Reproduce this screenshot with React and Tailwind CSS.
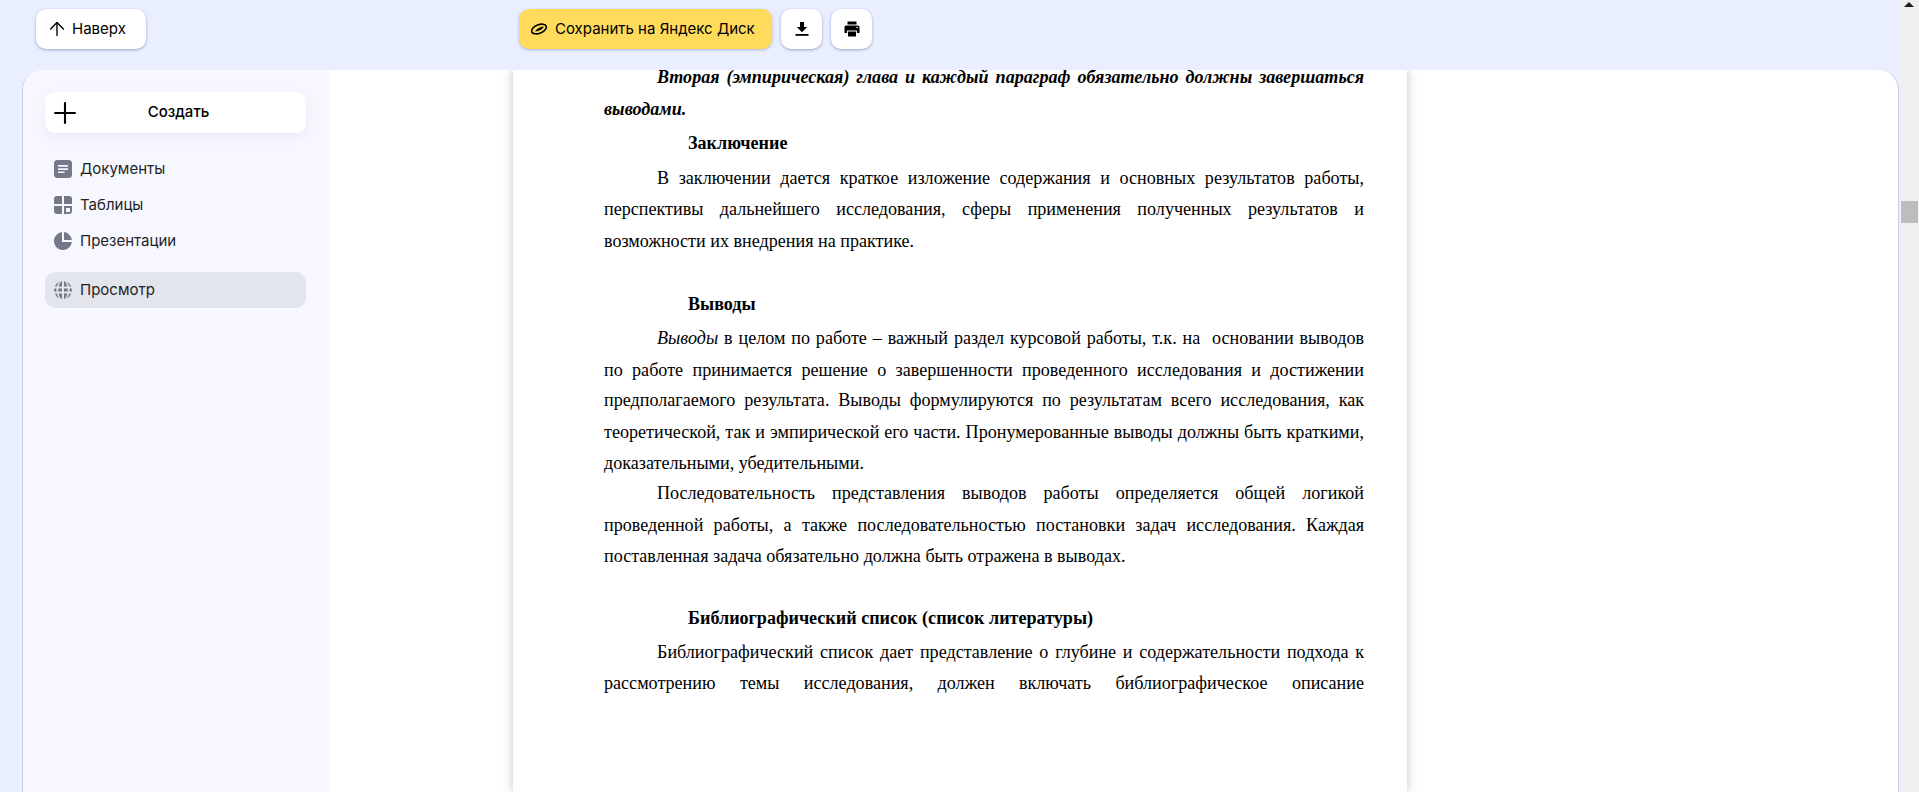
import React from "react";
import { ArrowUp, Plus } from "lucide-react";

const DiskIcon = () => (
  <svg width="18" height="14" viewBox="0 0 18 14" fill="none" stroke="#000" strokeWidth="1.6">
    <ellipse cx="9" cy="7" rx="7.8" ry="4.2" transform="rotate(-22 9 7)" />
    <path d="M5 9.5C7 6.5 10 5 14 4.6C12.5 7.5 9 9.5 5 9.5Z" fill="#000" stroke="none" />
  </svg>
);

const DownloadIcon = () => (
  <svg width="14" height="14" viewBox="0 0 14 14" fill="#000">
    <path d="M5 0h4v5h3.2L7 10.2 1.8 5H5z" />
    <rect x="0.5" y="12" width="13" height="1.8" />
  </svg>
);

const PrintIcon = () => (
  <svg width="16" height="16" viewBox="0 0 16 16" fill="#000">
    <path d="M3.5 0.5h9v3h-9z" />
    <path d="M2 4.5h12a1.5 1.5 0 0 1 1.5 1.5v6H13V9.5H3V12H0.5V6A1.5 1.5 0 0 1 2 4.5z" />
    <path d="M4 10.5h8v5H4z" />
    <rect x="12.4" y="5.8" width="1.4" height="1.2" fill="#fff" />
  </svg>
);

const DocsIcon = () => (
  <svg width="18" height="18" viewBox="0 0 18 18">
    <rect width="18" height="18" rx="3.5" fill="#77778a" />
    <path d="M4 5h10v1.7H4zM4 8.2h10v1.7H4zM4 11.4h6.5v1.7H4z" fill="#f7f8ff" />
  </svg>
);

const TablesIcon = () => (
  <svg width="18" height="18" viewBox="0 0 18 18" fill="#77778a">
    <path d="M0 3a3 3 0 0 1 3-3h5v8H0zM10 0h5a3 3 0 0 1 3 3v5h-8zM0 10h8v8H3a3 3 0 0 1-3-3z" />
    <path d="M10 10h8v5a3 3 0 0 1-3 3h-5zM12 12v4h3.5a.5.5 0 0 0 .5-.5V12z" fillRule="evenodd" />
  </svg>
);

const SlidesIcon = () => (
  <svg width="18" height="18" viewBox="0 0 18 18" fill="#77778a">
    <path d="M8 .1V10h9.9A9 9 0 1 1 8 .1z" />
    <path d="M10 .1A9 9 0 0 1 17.9 8H10z" />
  </svg>
);

const GlobeIcon = () => (
  <svg width="18" height="18" viewBox="0 0 18 18" fill="#77778a">
    <path d="M8 0v5.500H4.600C5.200 2.900 6.400.8 8 0zM10 0c1.600.8 2.800 2.900 3.400 5.500H10zM5.800.5C4.400 1.700 3.400 3.400 2.800 5.500H.8A9 9 0 0 1 5.800.5zM12.200.5a9 9 0 0 1 5 5h-2C14.600 3.400 13.600 1.700 12.200.5z" />
    <path d="M.2 7.500h2.300a13 13 0 0 0 0 3H.2a9 9 0 0 1 0-3zM4.300 7.500H8v3H4.300a12 12 0 0 1 0-3zM10 7.500h3.700a12 12 0 0 1 0 3H10zM15.500 7.500h2.300a9 9 0 0 1 0 3h-2.300a13 13 0 0 0 0-3z" />
    <path d="M.8 12.500h2c.6 2.100 1.600 3.800 3 5a9 9 0 0 1-5-5zM4.600 12.500H8V18c-1.600-.8-2.800-2.900-3.400-5.500zM10 12.500h3.400c-.6 2.600-1.800 4.700-3.400 5.500zM15.200 12.500h2a9 9 0 0 1-5 5c1.400-1.200 2.400-2.900 3-5z" />
  </svg>
);

const NavItem = ({ icon, label, className = "" }) => (
  <div className={`flex items-center h-9 pl-[9px] gap-2 rounded-[10px] text-[15px] text-[#1f1f25] ${className}`}>
    {icon}
    <span>{label}</span>
  </div>
);

const Line = ({ className = "", children }) => (
  <p className={`h-[31px] leading-[31px] whitespace-nowrap ${className}`}>{children}</p>
);

const just = "text-justify [text-align-last:justify]";

export default function App() {
  return (
    <div className="flex h-screen overflow-hidden bg-[#e9efff] font-['Inter',sans-serif] text-black">
      <div className="flex min-w-0 flex-1 flex-col">
        {/* Top bar */}
        <div className="flex h-[70px] shrink-0 items-start pl-9 pt-[9px]">
          <button className="flex h-10 w-[110px] items-center gap-1 rounded-[10px] bg-white pl-[10px] text-[15px] shadow-[0_1px_3px_rgba(60,70,130,0.45)]">
            <ArrowUp size={22} strokeWidth={1.5} />
            <span>Наверх</span>
          </button>
          <div className="ml-[373px] flex items-center gap-[9px]">
            <button className="flex h-10 w-[253px] items-center gap-[7px] rounded-[10px] bg-[#ffdb5c] pl-[11px] text-[15px] shadow-[0_1px_3px_rgba(60,70,130,0.35)]">
              <DiskIcon />
              <span>Сохранить на Яндекс Диск</span>
            </button>
            <button className="flex h-10 w-[41px] items-center justify-center rounded-[10px] bg-white shadow-[0_1px_3px_rgba(60,70,130,0.45)]">
              <DownloadIcon />
            </button>
            <button className="flex h-10 w-[41px] items-center justify-center rounded-[10px] bg-white shadow-[0_1px_3px_rgba(60,70,130,0.45)]">
              <PrintIcon />
            </button>
          </div>
        </div>

        {/* Panel */}
        <div className="ml-[22px] flex min-h-0 flex-1 overflow-hidden rounded-t-[20px] border-x border-[#c6cbe6] bg-white">
          <aside className="w-[306px] shrink-0 bg-[#f7f8ff] px-[22px] pt-[22px]">
            <button className="relative flex h-[41px] w-[261px] items-center justify-center rounded-[10px] bg-white pl-[6px] text-[15px] font-medium shadow-[0_4px_14px_rgba(60,70,130,0.08)]">
              <Plus size={34} strokeWidth={1.5} className="absolute left-[3px]" />
              <span>Создать</span>
            </button>
            <nav className="mt-[18px] w-[261px]">
              <NavItem icon={<DocsIcon />} label="Документы" />
              <NavItem icon={<TablesIcon />} label="Таблицы" />
              <NavItem icon={<SlidesIcon />} label="Презентации" />
              <NavItem icon={<GlobeIcon />} label="Просмотр" className="mt-[13px] bg-[#e2e5ec]" />
            </nav>
          </aside>

          <main className="min-w-0 flex-1 pl-[184px]">
            <div className="h-full w-[894px] overflow-hidden bg-white pl-[91px] font-['Liberation_Serif',serif] text-[18.1px] shadow-[0_0_10px_rgba(0,0,0,0.25)]">
              <div className="-mt-[8px] w-[760px]">
                <Line className={`pl-[53px] font-bold italic ${just}`}>Вторая (эмпирическая) глава и каждый параграф обязательно должны завершаться</Line>
                <Line className="mt-px font-bold italic">выводами.</Line>
                <Line className="mt-[3px] pl-[84px] font-bold">Заключение</Line>
                <Line className={`mt-[4px] pl-[53px] ${just}`}>В заключении дается краткое изложение содержания и основных результатов работы,</Line>
                <Line className={just}>перспективы дальнейшего исследования, сферы применения полученных результатов и</Line>
                <Line className="mt-px">возможности их внедрения на практике.</Line>
                <Line className="mt-8 pl-[84px] font-bold">Выводы</Line>
                <Line className={`mt-[3px] pl-[53px] ${just}`}><i>Выводы</i> в целом по работе – важный раздел курсовой работы, т.к. на&nbsp; основании выводов</Line>
                <Line className={`mt-px ${just}`}>по работе принимается решение о завершенности проведенного исследования и достижении</Line>
                <Line className={`-mt-px ${just}`}>предполагаемого результата. Выводы формулируются по результатам всего исследования, как</Line>
                <Line className={`mt-px ${just}`}>теоретической, так и эмпирической его части. Пронумерованные выводы должны быть краткими,</Line>
                <Line>доказательными, убедительными.</Line>
                <Line className={`-mt-px pl-[53px] ${just}`}>Последовательность представления выводов работы определяется общей логикой</Line>
                <Line className={`mt-px ${just}`}>проведенной работы, а также последовательностью постановки задач исследования. Каждая</Line>
                <Line>поставленная задача обязательно должна быть отражена в выводах.</Line>
                <Line className="mt-[31px] pl-[84px] font-bold">Библиографический список (список литературы)</Line>
                <Line className={`mt-[3px] pl-[53px] ${just}`}>Библиографический список дает представление о глубине и содержательности подхода к</Line>
                <Line className={just}>рассмотрению темы исследования, должен включать библиографическое описание</Line>
              </div>
            </div>
          </main>
        </div>
      </div>

      {/* Scrollbar */}
      <div className="relative w-5 shrink-0 bg-[#f0f0f0]">
        <div className="mx-auto mt-[2px] h-0 w-0 border-x-[5px] border-b-[5px] border-x-transparent border-b-[#1e1e1e]" />
        <div className="absolute left-[2px] top-[201px] h-[22px] w-[17px] bg-[#bdbdbd]" />
      </div>
    </div>
  );
}
